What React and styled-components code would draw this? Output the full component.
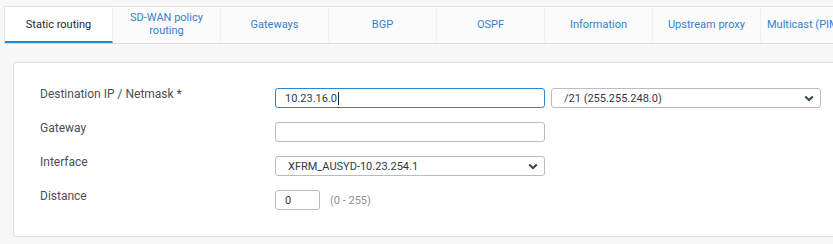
import React from "react";
import styled, { createGlobalStyle } from "styled-components";

const Global = createGlobalStyle`
  html, body { margin: 0; padding: 0; background: #f7f7f7; overflow: hidden; }
  body { font-family: Roboto, "Noto Sans", Arial, sans-serif; }
`;

const Page = styled.div`
  width: 833px;
  height: 244px;
  padding: 6px 0 0 4px;
  box-sizing: border-box;
`;

const TabBar = styled.div`
  display: flex;
  width: 860px;
  background: #fbfbfb;
  border-top: 1px solid #e3e3e3;
  border-bottom: 1px solid #dcdcdc;
  border-left: 1px solid #e3e3e3;
`;

const Tab = styled.div`
  flex: 0 0 108px;
  height: 36px;
  box-sizing: border-box;
  display: flex;
  align-items: center;
  justify-content: center;
  text-align: center;
  font-size: 11px;
  line-height: 13px;
  padding: 0 6px;
  color: ${(p) => (p.$active ? "#1f1f2a" : "#3580cc")};
  background: ${(p) => (p.$active ? "#ffffff" : "transparent")};
  border-right: 1px solid #f0f0f0;
  border-bottom: 2px solid ${(p) => (p.$active ? "#1b8ddb" : "transparent")};
  white-space: ${(p) => (p.$nowrap ? "nowrap" : "normal")};
  justify-content: ${(p) => (p.$nowrap ? "flex-start" : "center")};
`;

const Panel = styled.div`
  margin: 18px 0 0 9px;
  width: 840px;
  background: #fff;
  border: 1px solid #dcdcdc;
  border-radius: 3px;
  box-sizing: border-box;
  padding: 25px 0 26px 26px;
`;

const Form = styled.div`
  display: grid;
  grid-template-columns: 235px auto;
  row-gap: 14px;
`;

const Label = styled.div`
  font-size: 12px;
  line-height: 16px;
  color: #4a4f57;
  margin-top: -2px;
`;

const Field = styled.div`
  display: flex;
  align-items: center;
  gap: 6px;
`;

const Input = styled.div`
  width: ${(p) => p.$w}px;
  height: 20px;
  box-sizing: border-box;
  border: 1px solid ${(p) => (p.$focus ? "#2a86d1" : "#b9bcc0")};
  border-radius: 3px;
  padding: 0 0 0 9px;
  font-size: 11px;
  color: #2f3a4a;
  display: flex;
  align-items: center;
  background: #fff;
`;

const Caret = styled.span`
  display: inline-block;
  width: 1px;
  height: 13px;
  background: #222;
  margin-left: 1px;
`;

const Select = styled(Input)`
  padding-left: 12px;
  justify-content: space-between;
  padding-right: 6px;
`;

const Hint = styled.span`
  font-size: 11px;
  color: #8a8f96;
  margin-left: 4px;
`;

const Chevron = () => (
  <svg width="10" height="7" viewBox="0 0 10 7">
    <path d="M1.2 1.4 L5 5 L8.8 1.4" fill="none" stroke="#3a4654" strokeWidth="2" />
  </svg>
);

export default function App() {
  const tabs = [
    "Static routing",
    "SD-WAN policy routing",
    "Gateways",
    "BGP",
    "OSPF",
    "Information",
    "Upstream proxy",
    "Multicast (PIM-SM)",
  ];
  return (
    <>
      <Global />
      <Page>
        <TabBar>
          {tabs.map((t, i) => (
            <Tab key={t} $active={i === 0} $nowrap={i === 7}>
              {t}
            </Tab>
          ))}
        </TabBar>
        <Panel>
          <Form>
            <Label>Destination IP / Netmask *</Label>
            <Field>
              <Input $w={270} $focus>
                10.23.16.0
                <Caret />
              </Input>
              <Select $w={270}>
                <span>/21 (255.255.248.0)</span>
                <Chevron />
              </Select>
            </Field>
            <Label>Gateway</Label>
            <Field>
              <Input $w={270} />
            </Field>
            <Label>Interface</Label>
            <Field>
              <Select $w={270}>
                <span>XFRM_AUSYD-10.23.254.1</span>
                <Chevron />
              </Select>
            </Field>
            <Label>Distance</Label>
            <Field>
              <Input $w={45}>0</Input>
              <Hint>(0 - 255)</Hint>
            </Field>
          </Form>
        </Panel>
      </Page>
    </>
  );
}
